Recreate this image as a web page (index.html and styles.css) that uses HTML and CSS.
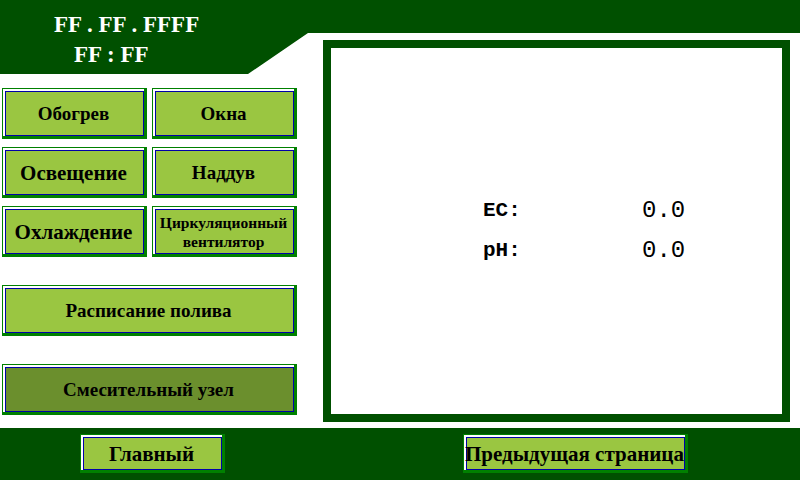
FILE: index.html
```html
<!DOCTYPE html>
<html lang="ru">
<head>
<meta charset="utf-8">
<title>Смесительный узел</title>
<link rel="stylesheet" href="styles.css">
</head>
<body>
<div class="screen">
  <header class="header">
    <div class="date">FF . FF . FFFF</div>
    <div class="time">FF : FF</div>
  </header>

  <nav class="menu">
    <div class="pair">
      <div class="btn f19">Обогрев</div>
      <div class="btn f19">Окна</div>
    </div>
    <div class="pair">
      <div class="btn f21">Освещение</div>
      <div class="btn f19">Наддув</div>
    </div>
    <div class="pair">
      <div class="btn f21">Охлаждение</div>
      <div class="btn f15">Циркуляционный<br>вентилятор</div>
    </div>
    <div class="btn wide f19">Расписание полива</div>
    <div class="btn wide active f19">Смесительный узел</div>
  </nav>

  <section class="panel">
    <div class="readings">
      <div class="label">EC:</div>
      <div class="value">0.0</div>
      <div class="label">pH:</div>
      <div class="value">0.0</div>
    </div>
  </section>

  <footer class="footer">
    <div class="btn foot main f21">Главный</div>
    <div class="btn foot prev f21">Предыдущая страница</div>
  </footer>
</div>
</body>
</html>
```

FILE: styles.css
```css
html, body {
  margin: 0;
  padding: 0;
  background: #ffffff;
}

.screen {
  width: 800px;
  height: 480px;
  display: grid;
  grid-template-columns: 323px 1fr;
  grid-template-rows: 40px 34px 348px 6px 52px;
  background: #ffffff;
  overflow: hidden;
  font-family: "Liberation Serif", "Times New Roman", serif;
}

.header {
  grid-row: 1 / 3;
  grid-column: 1 / 3;
  background: #005000;
  clip-path: polygon(0 0, 800px 0, 800px 33px, 308px 33px, 248px 74px, 0 74px);
  color: #ffffff;
  font-weight: bold;
  font-size: 23px;
  line-height: 30px;
  padding-top: 10px;
  box-sizing: border-box;
}

.date {
  padding-left: 54px;
}

.time {
  padding-left: 74px;
}

.menu {
  grid-row: 3;
  grid-column: 1;
  display: flex;
  flex-direction: column;
  gap: 8px;
  padding: 14px 0 0 2px;
}

.pair {
  display: flex;
  gap: 5px;
}

.btn {
  box-sizing: border-box;
  width: 145px;
  height: 51px;
  padding-top: 3px;
  display: flex;
  align-items: center;
  justify-content: center;
  text-align: center;
  background: #9ac641;
  color: #000000;
  font-weight: bold;
  border-style: solid;
  border-color: #008000;
  border-width: 1px 3px 3px 1px;
  box-shadow:
    inset 2px 2px 0 #ffffff,
    inset 3px 3px 0 #0000a8,
    inset -1px -1px 0 #0000a8;
  white-space: nowrap;
}

.btn.wide {
  width: 295px;
  margin-top: 20px;
}

.btn.active {
  background: #6b8f2d;
}

.f15 { font-size: 15.5px; line-height: 19px; }
.f19 { font-size: 19px; }
.f21 { font-size: 21px; }

.panel {
  grid-row: 2 / 4;
  grid-column: 2;
  margin-right: 10px;
  border: 8px solid #005000;
  background: #ffffff;
  display: flex;
  align-items: center;
  padding-left: 152px;
}

.readings {
  display: grid;
  grid-template-columns: 159px auto;
  grid-auto-rows: 40px;
  align-items: center;
  margin-top: -2px;
}

.label {
  font-family: "Liberation Mono", "Courier New", monospace;
  font-weight: bold;
  font-size: 21px;
  color: #000000;
}

.value {
  font-family: "Liberation Mono", "Courier New", monospace;
  font-size: 24px;
  color: #000000;
}

.footer {
  grid-row: 5;
  grid-column: 1 / 3;
  background: #005000;
  display: flex;
  align-items: flex-start;
  padding: 6px 0 0 80px;
  gap: 238px;
}

.btn.foot {
  height: 39px;
}

.btn.prev {
  width: 225px;
}
```
